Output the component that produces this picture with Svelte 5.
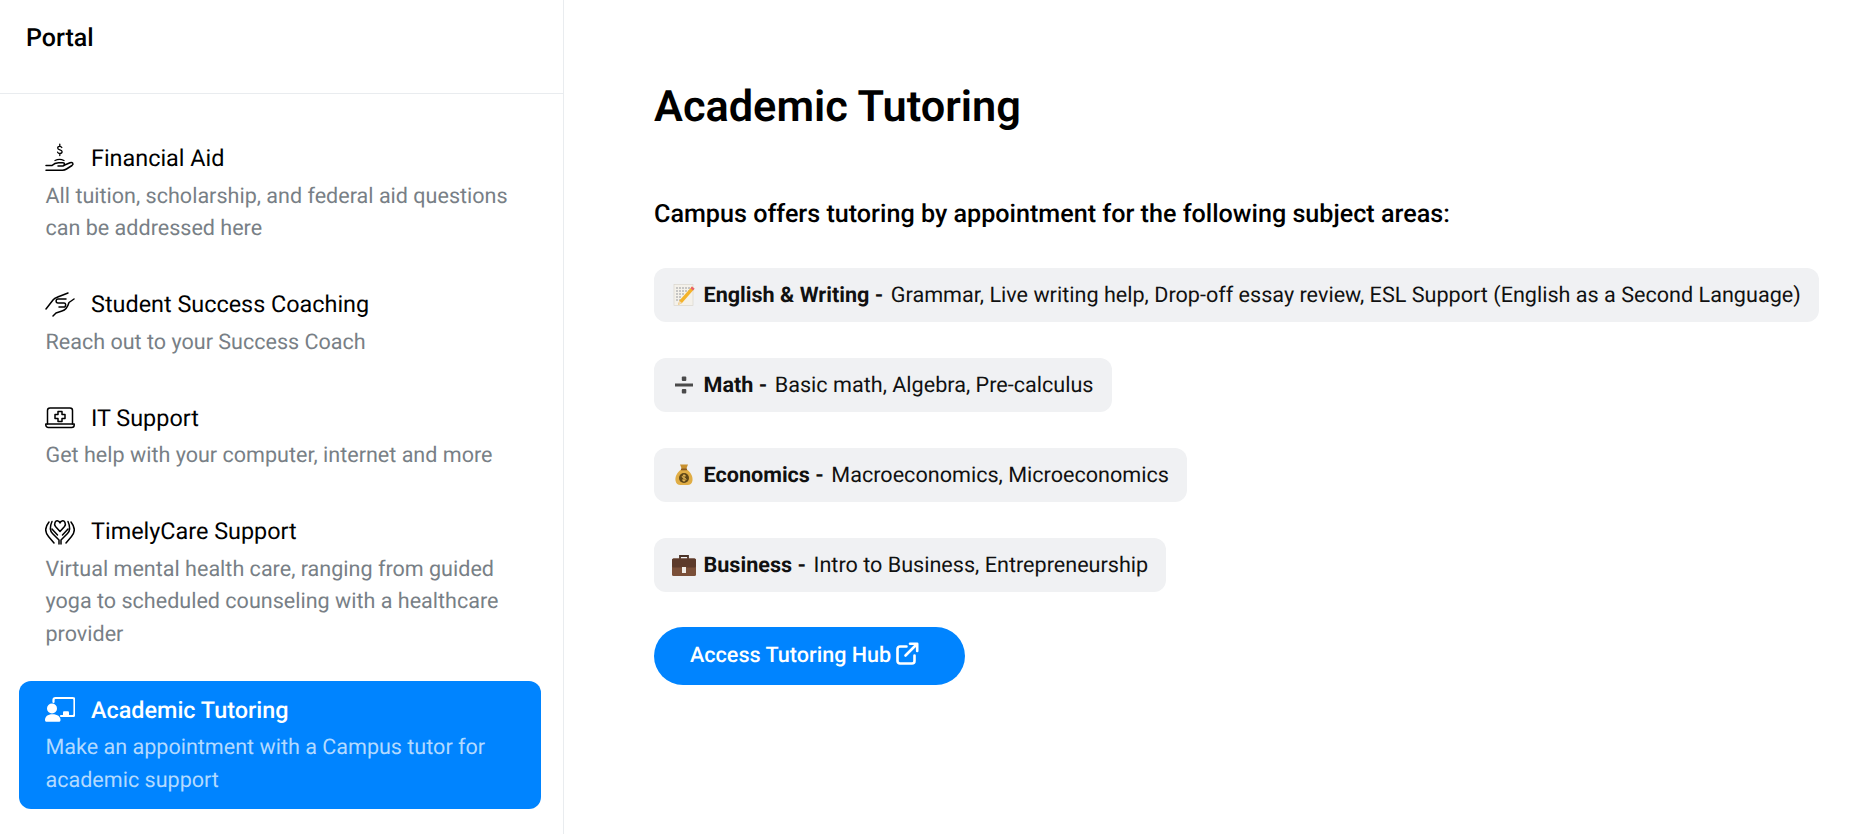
<script>
  const items = [
    { icon: 'aid', title: 'Financial Aid', text: 'All tuition, scholarship, and federal aid questions can be addressed here' },
    { icon: 'coach', title: 'Student Success Coaching', text: 'Reach out to your Success Coach' },
    { icon: 'it', title: 'IT Support', text: 'Get help with your computer, internet and more' },
    { icon: 'care', title: 'TimelyCare Support', text: 'Virtual mental health care, ranging from guided yoga to scheduled counseling with a healthcare provider' },
    { icon: 'tutor', title: 'Academic Tutoring', text: 'Make an appointment with a Campus tutor for academic support', active: true }
  ];

  const subjects = [
    { icon: 'memo', name: 'English & Writing', text: 'Grammar, Live writing help, Drop-off essay review, ESL Support (English as a Second Language)' },
    { icon: 'divide', name: 'Math', text: 'Basic math, Algebra, Pre-calculus' },
    { icon: 'money', name: 'Economics', text: 'Macroeconomics, Microeconomics' },
    { icon: 'case', name: 'Business', text: 'Intro to Business, Entrepreneurship' }
  ];
</script>

<div class="page">
  <aside class="sidebar">
    <header class="brand">Portal</header>
    <nav class="list">
      {#each items as item}
        <a class="item" class:active={item.active} href="#top">
          <div class="title">
            <svg class="icon" viewBox="0 0 30 30" fill="none" stroke="currentColor" stroke-width="1.500" stroke-linecap="round" stroke-linejoin="round">
              {#if item.icon === 'aid'}
                <path d="M1 22.500h6c1.700-1.800 4-2.800 6.500-2.800h4.500c2 0 2 3.200 0 3.200h-5" />
                <path d="M18.500 22.500l6.500-2.800c2.600-1 4 1.400 2 2.800l-5.500 3.500c-1.200.8-2.500 1.200-4 1.200H1" />
                <path d="M16.800 4.500c-.4-.8-1.100-1.200-2-1.200-1.300 0-2.100.7-2.100 1.700 0 2.400 4.400 1.300 4.400 3.700 0 1-.9 1.800-2.200 1.800-1 0-1.900-.5-2.300-1.300M14.800 1.200v2M14.800 10.500v2M10 17.500c3-1.500 6-1.500 9 0" stroke-width="1.300" />
              {:else if item.icon === 'coach'}
                <path d="M1 20l7-9c2-2.500 4-2.500 6-3.500L23 4" />
                <path d="M29 10l-5 3.500c-1 3.500-3 7.500-7 8.500l-6 2-3 3" />
                <path d="M21 10h-8c-2.500 0-2.500 4 0 4h6c2 0 2 2 1 4h-6" />
              {:else if item.icon === 'it'}
                <path d="M2.500 21V7.500C2.500 6.100 3.600 5 5 5h20c1.400 0 2.500 1.100 2.500 2.500V21" />
                <path d="M.8 21h28.400v1c0 1.400-1.100 2.500-2.500 2.500H3.300C1.900 24.500.8 23.400.8 22z" />
                <path d="M13 8.500h4v3h3v4h-3v3h-4v-3h-3v-4h3z" />
              {:else if item.icon === 'care'}
                <path d="M15 15.500l-4.500-5c-2-2.500 0-6.500 2.500-5.500 1 .3 1.600 1 2 2 .4-1 1-1.700 2-2 2.500-1 4.500 3 2.500 5.500z" />
                <path d="M4 6C0 11 0 16.500 3.500 20.500L9 27" />
                <path d="M26 6c4 5 4 10.500.5 14.500L21 27" />
                <path d="M7 5.500c-2 4.500-2.500 9 .5 12L14 24v4" />
                <path d="M23 5.500c2 4.500 2.500 9-.5 12L16 24v4" />
                <path d="M7 13l5.500 6M23 13l-5.500 6" />
              {:else if item.icon === 'tutor'}
                <path d="M8.500 7V5c0-1.100.9-2 2-2h17c1.100 0 2 .9 2 2v14c0 1.100-.9 2-2 2H16" stroke-width="2.200" />
                <circle cx="7" cy="13.500" r="5" fill="currentColor" stroke="none" />
                <path d="M0 25c0-3.500 2.500-5.800 7.500-5.800S15.500 21.500 15.500 25c0 1.200-.5 1.800-1.700 1.800H1.700C.5 26.800 0 26.200 0 25z" fill="currentColor" stroke="none" />
                <path d="M18 21v-3.500c0-.8.600-1.300 1.300-1.300h3.400c.7 0 1.300.5 1.300 1.300V21z" fill="currentColor" stroke="none" />
              {/if}
            </svg>
            <span>{item.title}</span>
          </div>
          <p>{item.text}</p>
        </a>
      {/each}
    </nav>
  </aside>

  <main class="content">
    <h1>Academic Tutoring</h1>
    <h2>Campus offers tutoring by appointment for the following subject areas:</h2>
    <ul class="subjects">
      {#each subjects as subject}
        <li>
          <span class="emoji">
            {#if subject.icon === 'memo'}
              <svg viewBox="0 0 24 24" width="24" height="24">
                <rect x="2" y="1.500" width="19" height="21" fill="#f4f1ea" stroke="#d6d2c8" stroke-width=".6" />
                <path d="M4 5h14M4 8h14M4 11h9M4 14h6M4 17h5" stroke="#8f9297" stroke-width=".9" stroke-dasharray="2 1" />
                <path d="M20 3.500l2.500 2.200L10 20l-4 2 1.300-4.300z" fill="#f3b32c" />
                <path d="M20 3.500l2.500 2.200-1.500 1.700-2.500-2.200z" fill="#e8606e" />
                <path d="M7.300 17.700L10 20l-4 2z" fill="#f0d9b5" />
              </svg>
            {:else if subject.icon === 'divide'}
              <svg viewBox="0 0 24 24" width="24" height="24">
                <rect x="3" y="10.500" width="18" height="3" fill="#4a4a4a" />
                <rect x="9.800" y="3.500" width="4.500" height="4.500" rx="1" fill="#4a4a4a" />
                <rect x="9.800" y="16" width="4.500" height="4.500" rx="1" fill="#4a4a4a" />
              </svg>
            {:else if subject.icon === 'money'}
              <svg viewBox="0 0 24 24" width="24" height="24">
                <path d="M8 1.500h8l-2 5h-4z" fill="#c8912f" />
                <path d="M9 6.500h6c4 3 6 7 5.500 11-.3 3-2.500 4.500-5 4.500h-7c-2.500 0-4.700-1.500-5-4.500C3 13.500 5 9.500 9 6.500z" fill="#e0ad45" />
                <rect x="9" y="5.500" width="6" height="1.800" fill="#8a5a20" />
                <circle cx="12" cy="15" r="5" fill="#5f4718" />
                <path d="M14 13.200c-.5-.8-3.800-1-3.800.6 0 1.700 3.800.7 3.800 2.500 0 1.500-3.400 1.400-4 .4M12 11.200v7.600" stroke="#e9bb58" stroke-width="1" fill="none" />
              </svg>
            {:else if subject.icon === 'case'}
              <svg viewBox="0 0 24 24" width="24" height="24">
                <path d="M8 6V3h8v3" fill="none" stroke="#4a3226" stroke-width="1.800" />
                <rect x="0" y="5.500" width="24" height="17.500" rx="1.500" fill="#7a4f38" />
                <rect x="0" y="5.500" width="24" height="9" rx="1.500" fill="#5c3a2a" />
                <rect x="10" y="14" width="4" height="6" fill="#f0ece6" />
              </svg>
            {/if}
          </span>
          <strong>{subject.name} -</strong>
          <span class="detail">{subject.text}</span>
        </li>
      {/each}
    </ul>
    <a class="hub" href="#top">
      Access Tutoring Hub
      <svg viewBox="0 0 24 24" width="24" height="24" fill="none" stroke="#fff" stroke-width="2.600" stroke-linecap="round" stroke-linejoin="round">
        <path d="M19.500 13.500v5.500c0 1.400-1.100 2.500-2.500 2.500H5c-1.400 0-2.500-1.100-2.500-2.500V7c0-1.400 1.100-2.500 2.500-2.500h6.500" />
        <path d="M15 1.800h7.200V9M22 2L10.500 13.500" />
      </svg>
    </a>
  </main>
</div>

<style>
  :global(body) {
    margin: 0;
    background: #fff;
  }

  .page {
    display: flex;
    min-height: 834px;
    font-family: Roboto, "Liberation Sans", sans-serif;
    text-rendering: geometricPrecision;
    color: #000;
  }

  .sidebar {
    width: 563px;
    flex: none;
    border-right: 1px solid #e9ecef;
  }

  .brand {
    height: 94px;
    box-sizing: border-box;
    padding: 22px 26px 0;
    border-bottom: 1px solid #e9ecef;
    font-size: 25px;
    line-height: 34px;
    font-weight: 500;
  }

  .list {
    display: flex;
    flex-direction: column;
    gap: 18px;
    padding: 35px 22px 0 19px;
  }

  .item {
    display: block;
    padding: 12px 26.500px 11.500px;
    border-radius: 12px;
    color: inherit;
    text-decoration: none;
  }

  .item.active {
    background: #0084ff;
    color: #fff;
  }

  .title {
    display: flex;
    align-items: center;
    gap: 16px;
    margin-bottom: 5.500px;
    font-size: 23.400px;
    line-height: 34px;
  }

  .active .title {
    font-weight: 500;
  }

  .icon {
    width: 30px;
    height: 30px;
    flex: none;
    margin-left: -0.500px;
  }

  p {
    margin: 0;
    font-size: 21.550px;
    line-height: 32.500px;
    color: #787f86;
  }

  .active p {
    color: #b3daff;
  }

  .content {
    flex: 1;
    padding: 79px 16px 0 90px;
    min-width: 0;
  }

  h1 {
    margin: 0 0 63px;
    font-size: 43.300px;
    line-height: 56px;
    font-weight: 600;
  }

  h2 {
    margin: 0 0 36px;
    font-size: 25.150px;
    line-height: 34px;
    font-weight: 500;
  }

  .subjects {
    display: flex;
    flex-direction: column;
    align-items: flex-start;
    gap: 36px;
    margin: 0 0 35px;
    padding: 0;
    list-style: none;
  }

  li {
    display: flex;
    align-items: center;
    height: 54px;
    box-sizing: border-box;
    padding: 0 18px;
    background: #f0f1f3;
    border-radius: 12px;
    font-size: 21.600px;
    color: #111;
  }

  .emoji {
    display: flex;
    margin-right: 7.500px;
    width: 24px;
    flex: none;
  }

  strong {
    margin-right: 7.500px;
    font-weight: 700;
  }

  .hub {
    display: inline-flex;
    align-items: center;
    gap: 4px;
    height: 58px;
    box-sizing: border-box;
    padding: 0 46px 2px 36px;
    border-radius: 29px;
    background: #0084ff;
    color: #fff;
    font-size: 21.600px;
    font-weight: 500;
    text-decoration: none;
  }

  .hub svg {
    margin-top: -2px;
  }
</style>
